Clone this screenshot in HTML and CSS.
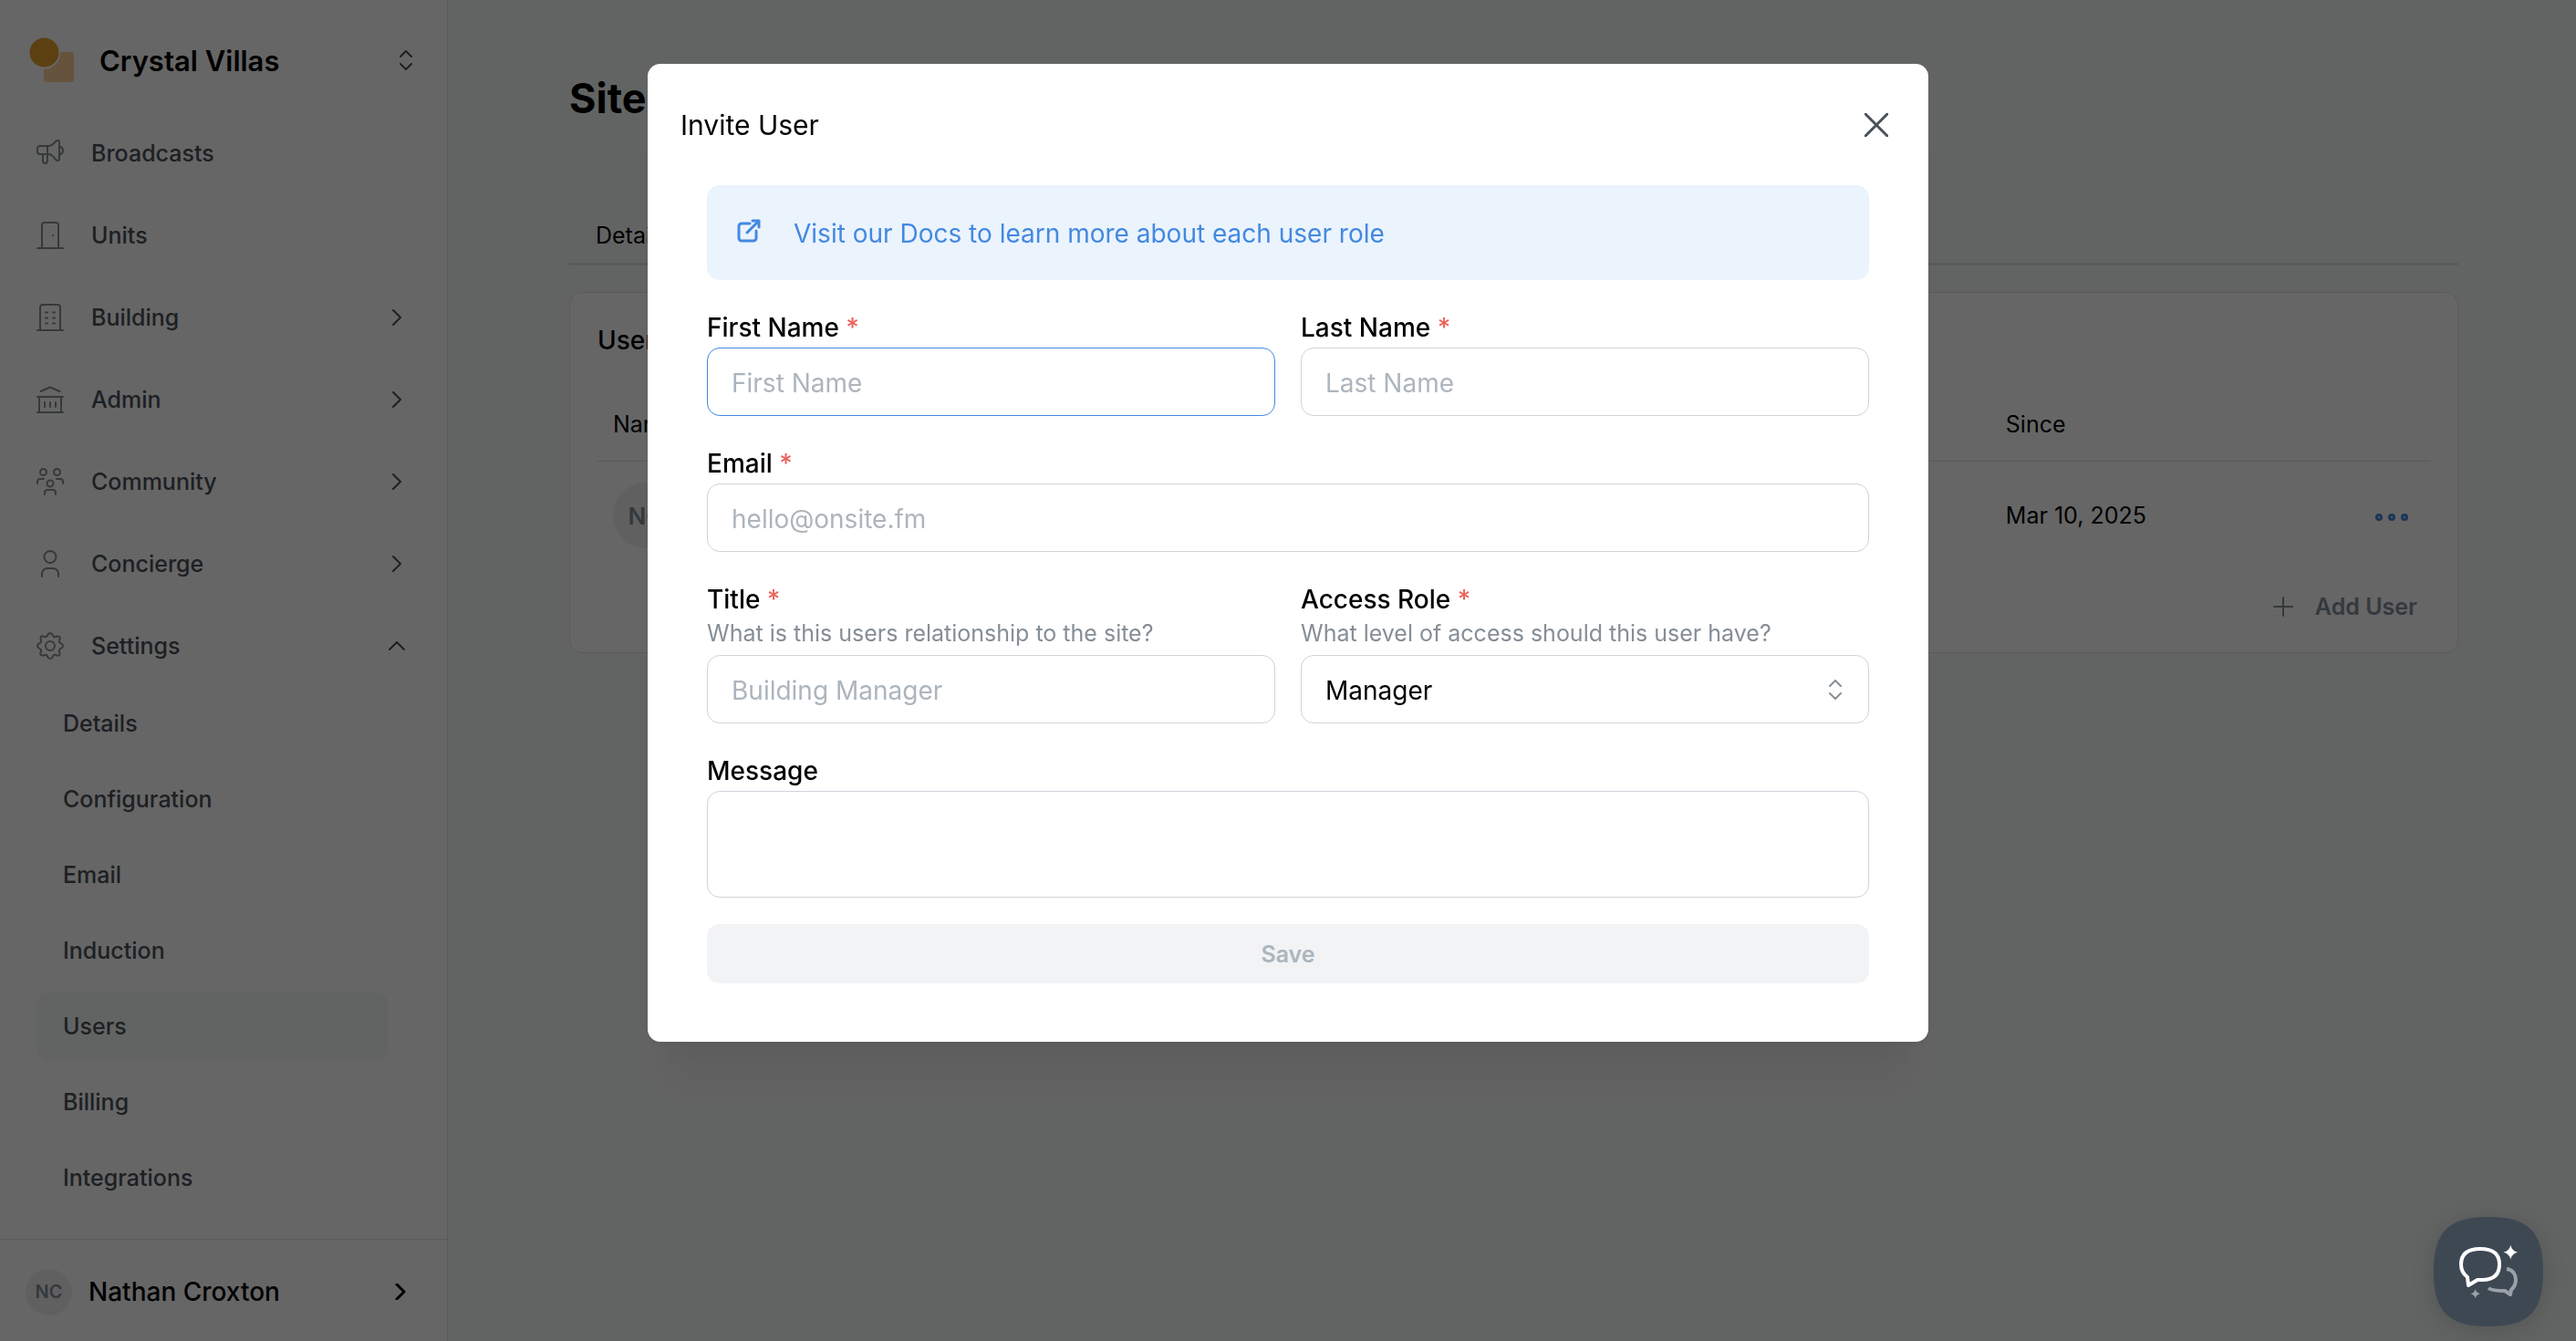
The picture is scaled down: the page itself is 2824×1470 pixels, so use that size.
FILE: index.html
```html
<!DOCTYPE html>
<html lang="en">
<head>
  <meta charset="UTF-8" />
  <meta name="viewport" content="width=device-width, initial-scale=1.0"/>
  <title>Crystal Villas - Users</title>
  <link rel="stylesheet" href="styles.css">
</head>
<body>
  <div class="app">
    <aside class="sidebar">
      <button class="site-switch" type="button">
        <svg class="logo" viewBox="0 0 50 50">
          <path d="M36 16h10a3 3 0 0 1 3 3v27a3 3 0 0 1-3 3H19a3 3 0 0 1-3-3V35a18 18 0 0 0 18-19z" fill="#ffcf9a"/>
          <circle cx="16.500" cy="16.500" r="16" fill="#e8a02e"/>
        </svg>
        <span>Crystal Villas</span>
        <svg class="selector" viewBox="0 0 14 22"><path d="M1 7l6-6 6 6M1 15l6 6 6-6"/></svg>
      </button>

      <nav class="nav">
        <a class="nav-item" href="#">
          <svg class="icon" viewBox="0 0 30 30"><path d="M12 7H4a3 3 0 0 0-3 3v3a3 3 0 0 0 3 3h8zM12 7h2q4-1 7-5 1-1 2.500-1 1.500 0 1.500 2v18q0 2-1.500 2-1.500 0-2.500-1-3-5-7-6h-2M25 7.500q4 1 4 4.500t-4 4.500M7 16v7q0 3 2.500 3t2.500-3v-7"/></svg>
          <span>Broadcasts</span>
        </a>
        <a class="nav-item" href="#">
          <svg class="icon" viewBox="0 0 30 30"><path d="M1 29h28M6 29V4a3 3 0 0 1 3-3h12a3 3 0 0 1 3 3v25M18 15v.2"/></svg>
          <span>Units</span>
        </a>
        <a class="nav-item" href="#">
          <svg class="icon" viewBox="0 0 30 30"><path d="M1 29h28M4 29V4a3 3 0 0 1 3-3h16a3 3 0 0 1 3 3v25M10 9.500h2M18 9.500h2M10 15.500h2M18 15.500h2M10 21.500h2M18 21.500h2"/></svg>
          <span>Building</span>
          <svg class="chevron" viewBox="0 0 18 18"><path d="M5 1l8 8-8 8"/></svg>
        </a>
        <a class="nav-item" href="#">
          <svg class="icon" viewBox="0 0 30 30"><path d="M1 29h28M1 12h28M3 12v17M27 12v17M4.500 6L15 1.500 25.500 6M9 18v5M15 18v5M21 18v5"/></svg>
          <span>Admin</span>
          <svg class="chevron" viewBox="0 0 18 18"><path d="M5 1l8 8-8 8"/></svg>
        </a>
        <a class="nav-item" href="#">
          <svg class="icon" viewBox="0 0 30 30"><circle cx="7.500" cy="4.500" r="3.500"/><circle cx="22.500" cy="4.500" r="3.500"/><circle cx="15" cy="17" r="3.500"/><path d="M1 17v-2q0-3 3-3h4M29 17v-2q0-3-3-3h-4M9 29v-2q0-3 3-3h6q3 0 3 3v2"/></svg>
          <span>Community</span>
          <svg class="chevron" viewBox="0 0 18 18"><path d="M5 1l8 8-8 8"/></svg>
        </a>
        <a class="nav-item" href="#">
          <svg class="icon" viewBox="0 0 30 30"><circle cx="15" cy="7.500" r="6.500"/><path d="M6 29v-3a6 6 0 0 1 6-6h6a6 6 0 0 1 6 6v3"/></svg>
          <span>Concierge</span>
          <svg class="chevron" viewBox="0 0 18 18"><path d="M5 1l8 8-8 8"/></svg>
        </a>
        <a class="nav-item" href="#">
          <svg class="icon" viewBox="0 0 30 30"><circle cx="15" cy="15" r="5"/><path d="M12.200 3.200Q13 1 15 1t2.800 2.200Q19 6 21.500 4.800 24 4 25.200 5t0 3.500Q24 11 26.800 12.200 29 13 29 15t-2.200 2.800Q24 19 25.200 21.500 26 24 25 25.200t-3.500 0Q19 24 17.800 26.800 17 29 15 29t-2.800-2.200Q11 24 8.500 25.200 6 26 4.800 25t0-3.500Q6 19 3.200 17.800 1 17 1 15t2.200-2.800Q6 11 4.800 8.500 4 6 5 4.800t3.500 0Q11 6 12.200 3.200z"/></svg>
          <span>Settings</span>
          <svg class="chevron" viewBox="0 0 18 18"><path d="M1 13l8-8 8 8"/></svg>
        </a>
        <div class="subnav">
          <a href="#">Details</a>
          <a href="#">Configuration</a>
          <a href="#">Email</a>
          <a href="#">Induction</a>
          <a class="active" href="#">Users</a>
          <a href="#">Billing</a>
          <a href="#">Integrations</a>
        </div>
      </nav>

      <button class="account" type="button">
        <span class="avatar small">NC</span>
        <span>Nathan Croxton</span>
        <svg class="chevron" viewBox="0 0 18 18"><path d="M5 1l8 8-8 8"/></svg>
      </button>
    </aside>

    <main class="main">
      <h1>Site</h1>
      <div class="tabs"><a href="#">Details</a></div>
      <section class="card">
        <h2>Users</h2>
        <table>
          <thead>
            <tr><th class="col-name">Name</th><th>Since</th><th></th></tr>
          </thead>
          <tbody>
            <tr>
              <td><span class="avatar">NC</span></td>
              <td>Mar 10, 2025</td>
              <td class="col-actions">
                <button class="dots" type="button" aria-label="Actions">
                  <svg viewBox="0 0 36 8"><circle cx="4" cy="4" r="2.500"/><circle cx="18" cy="4" r="2.500"/><circle cx="32" cy="4" r="2.500"/></svg>
                </button>
              </td>
            </tr>
          </tbody>
        </table>
        <button class="add-user" type="button">
          <svg viewBox="0 0 22 22"><path d="M11 1v20M1 11h20"/></svg>
          Add User
        </button>
      </section>
    </main>
  </div>

  <div class="overlay">
    <div class="modal" role="dialog" aria-labelledby="modal-title">
      <header class="modal-header">
        <h2 id="modal-title">Invite User</h2>
        <button class="close" type="button" aria-label="Close">
          <svg viewBox="0 0 26 26"><path d="M1 1l24 24M25 1L1 25"/></svg>
        </button>
      </header>

      <form class="form">
        <a class="docs" href="#">
          <svg viewBox="0 0 26 26"><path d="M14 5H5a3 3 0 0 0-3 3v13a3 3 0 0 0 3 3h13a3 3 0 0 0 3-3v-8M11 15L24 2M17 2h7v7"/></svg>
          Visit our Docs to learn more about each user role
        </a>

        <div class="row">
          <div class="field">
            <label for="first">First Name <span class="req">*</span></label>
            <input id="first" class="focused" placeholder="First Name"/>
          </div>
          <div class="field">
            <label for="last">Last Name <span class="req">*</span></label>
            <input id="last" placeholder="Last Name"/>
          </div>
        </div>

        <div class="field">
          <label for="email">Email <span class="req">*</span></label>
          <input id="email" type="email" placeholder="hello@onsite.fm"/>
        </div>

        <div class="row">
          <div class="field">
            <label for="title">Title <span class="req">*</span></label>
            <p class="hint">What is this users relationship to the site?</p>
            <input id="title" placeholder="Building Manager"/>
          </div>
          <div class="field">
            <label for="role">Access Role <span class="req">*</span></label>
            <p class="hint">What level of access should this user have?</p>
            <div class="select">
              <select id="role"><option>Manager</option></select>
              <svg viewBox="0 0 14 22"><path d="M1 7l6-6 6 6M1 15l6 6 6-6"/></svg>
            </div>
          </div>
        </div>

        <div class="field">
          <label for="message">Message</label>
          <textarea id="message"></textarea>
        </div>

        <button class="save" type="submit" disabled>Save</button>
      </form>
    </div>
  </div>

  <button class="chat" type="button" aria-label="Chat">
    <svg viewBox="0 0 120 120">
      <path d="M60 0C104 0 120 16 120 60S104 120 60 120 0 104 0 60 16 0 60 0z" fill="#3e4853"/>
      <path d="M80 57c7 1 10 6 10 12 0 5-2 8-5 11l-1 5-6-4c-7 0-14 0-18-3" fill="none" stroke="#9aa1a8" stroke-width="4" stroke-linecap="butt"/>
      <path d="M51 35c15 0 21 6 21 17s-6 17-19 17h-5l-10 6-1-9c-4-3-7-7-7-14 0-11 7-17 21-17z" fill="none" stroke="#fff" stroke-width="4" stroke-linejoin="round"/>
      <path d="M84.300 31q1.500 6.200 7.700 7.700-6.200 1.500-7.700 7.700-1.500-6.200-7.700-7.700 6.200-1.500 7.700-7.700z" fill="#fff"/>
      <path d="M45.700 79q1 4.300 5.300 5.300-4.300 1-5.300 5.300-1-4.300-5.300-5.300 4.300-1 5.300-5.300z" fill="#9aa1a8"/>
    </svg>
  </button>
</body>
</html>
```

FILE: styles.css
```css
* { box-sizing: border-box; }
body {
  margin: 0;
  font-family: Inter, "Noto Sans", sans-serif;
  font-size: 26px;
  color: #000;
  background: #f6faf7;
}
a { color: inherit; text-decoration: none; }
button, input, select, textarea { font: inherit; color: inherit; }
button { border: none; background: none; padding: 0; cursor: pointer; text-align: left; }
svg { fill: none; stroke: currentColor; stroke-width: 2; stroke-linecap: round; stroke-linejoin: round; flex: none; }
h1, h2, p { margin: 0; }

.app { display: flex; min-height: 100vh; }

/* sidebar */
.sidebar {
  width: 491px;
  flex: none;
  display: flex;
  flex-direction: column;
  background: #fff;
  border-right: 1px solid #dee2e6;
}
.site-switch {
  display: flex;
  align-items: center;
  height: 123px;
  padding: 9px 38px 0 32px;
  gap: 27px;
  font-size: 31px;
  font-weight: 600;
}
.logo { width: 50px; height: 50px; stroke: none; }
.selector { width: 14px; height: 22px; margin-left: auto; color: #495057; }
.nav { flex: 1; color: #495057; font-weight: 500; font-size: 25px; }
.nav-item {
  display: flex;
  align-items: center;
  height: 90px;
  padding: 0 46px 0 40px;
  gap: 30px;
}
.icon { width: 30px; height: 30px; color: #868e96; }
.chevron { width: 18px; height: 18px; margin-left: auto; }
.subnav {
  display: flex;
  flex-direction: column;
  gap: 8px;
  padding: 3px 64px 0 40px;
}
.subnav a { line-height: 75px; padding-left: 29px; border-radius: 14px; }
.subnav .active { background: #f6faf7; }
.account {
  display: flex;
  align-items: center;
  height: 112px;
  padding: 3px 42px 0 28px;
  gap: 18px;
  border-top: 1px solid #dee2e6;
  font-size: 28px;
  font-weight: 500;
}
.account .chevron { stroke-width: 3; }
.avatar {
  display: inline-flex;
  align-items: center;
  justify-content: center;
  width: 72px;
  height: 72px;
  border-radius: 50%;
  background: #f1f1f2;
  color: #868e96;
  font-size: 26px;
  font-weight: 600;
}
.avatar.small { width: 51px; height: 51px; font-size: 20px; }

/* page */
.main { flex: 1; padding: 74px 129px 0 133px; }
h1 { font-size: 45px; line-height: 68px; font-weight: 700; }
.tabs { margin-top: 83px; height: 66px; padding: 16px 29px 0; border-bottom: 3px solid #dee2e6; font-size: 25px; line-height: 34px; }
.card {
  display: flex;
  flex-direction: column;
  margin-top: 29px;
  padding: 32px 30px 20px;
  background: #fff;
  border: 1px solid #dee2e6;
  border-radius: 14px;
}
.card h2 { font-size: 28px; line-height: 40px; font-weight: 500; }
table { width: 100%; margin-top: 32px; border-collapse: collapse; font-size: 25px; }
th { height: 80px; padding: 0 17px; text-align: left; font-weight: 400; border-bottom: 1px solid #dee2e6; }
td { height: 120px; padding: 0 17px; }
.col-name { width: 76%; }
.col-actions { text-align: right; padding-right: 24px; }
.dots { vertical-align: middle; }
.dots svg { display: block; width: 36px; height: 8px; color: #4389e0; stroke-width: 3; }
.add-user {
  display: flex;
  align-items: center;
  align-self: flex-end;
  gap: 24px;
  margin-top: 10px;
  padding-right: 14px;
  color: #868e96;
  font-size: 25px;
  font-weight: 600;
  line-height: 60px;
}
.add-user svg { width: 22px; height: 22px; }

/* modal */
.overlay {
  position: fixed;
  inset: 0;
  padding: 70px 20px;
  background: rgba(0,0,0,0.6);
}
.modal {
  max-width: 1404px;
  margin: 0 auto;
  padding: 36px 36px 64px;
  background: #fff;
  border-radius: 14px;
  box-shadow: 0 2px 6px rgba(0,0,0,0.05), 0 64px 50px -12px rgba(0,0,0,0.05), 0 30px 30px -12px rgba(0,0,0,0.04);
}
.modal-header { display: flex; align-items: center; justify-content: space-between; height: 62px; padding-right: 8px; }
.modal-header h2 { font-size: 30px; font-weight: 400; }
.close { color: #495057; }
.close svg { display: block; width: 26px; height: 26px; stroke-width: 3; }
.form { display: flex; flex-direction: column; gap: 29px; padding: 35px 29px 0; }
.docs {
  display: flex;
  align-items: center;
  height: 104px;
  padding: 2px 33px 0;
  gap: 36px;
  border-radius: 14px;
  background: #ebf3fd;
  color: #4389e0;
  font-size: 28px;
}
.docs svg { width: 26px; height: 26px; margin-bottom: 6px; stroke-width: 3; }
.row { display: grid; grid-template-columns: 1fr 1fr; gap: 28px; }
.field { display: flex; flex-direction: column; }
label { padding-top: 2px; font-size: 28px; line-height: 43px; font-weight: 500; }
.req { color: #ec625c; }
.hint { margin-bottom: 9px; color: #868e96; font-size: 25px; line-height: 30px; }
input, textarea, select {
  width: 100%;
  height: 75px;
  padding: 2px 26px 0;
  border: 1px solid #ced4da;
  border-radius: 14px;
  background: #fff;
  font-size: 28px;
  outline: none;
}
input::placeholder { color: #adb5bd; opacity: 1; }
.focused { border-color: #4389e0; }
textarea { display: block; height: 117px; resize: none; }
.select { display: grid; align-items: center; }
.select > * { grid-area: 1 / 1; }
.select select { appearance: none; }
.select svg { width: 14px; height: 22px; margin-right: 30px; justify-self: end; color: #868e96; pointer-events: none; }
.save {
  height: 65px;
  border-radius: 14px;
  background: #f1f3f5;
  color: #adb5bd;
  font-size: 25px;
  font-weight: 600;
  text-align: center;
}

.chat { position: fixed; right: 36px; bottom: 16px; filter: drop-shadow(0 4px 12px rgba(0,0,0,0.15)); }
.chat svg { display: block; width: 120px; height: 120px; stroke: none; }
```
